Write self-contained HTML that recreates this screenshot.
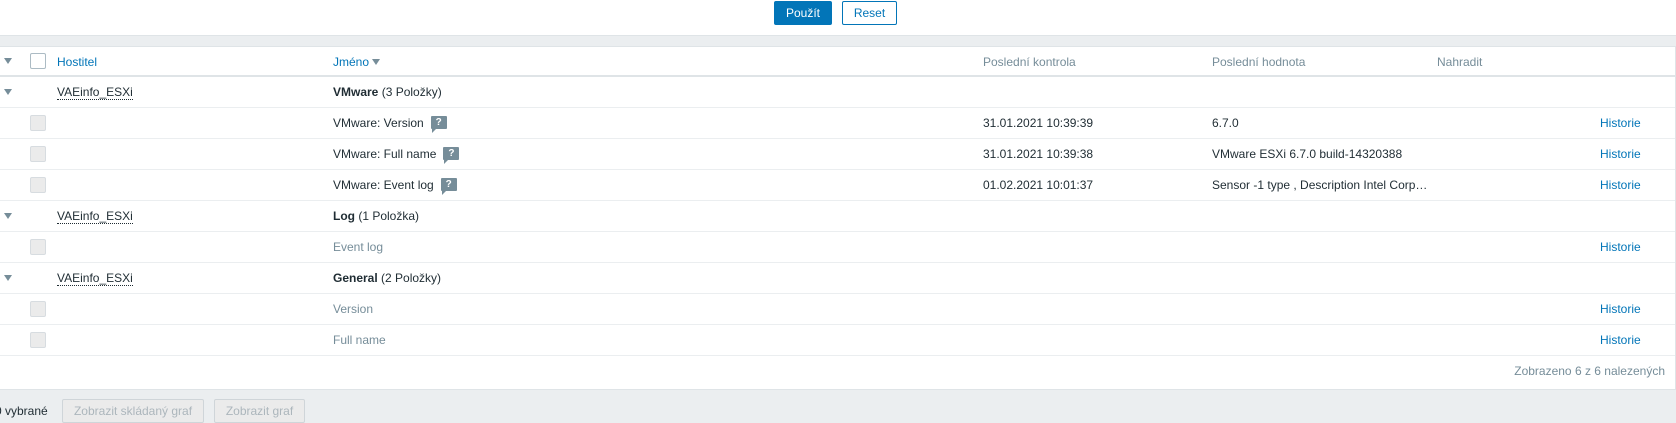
<html><head><style>
body{margin:0;width:1676px;height:419px;overflow:hidden;background:#ebeef0;font-family:"Liberation Sans",Arial,sans-serif;font-size:12px;color:#1f2c33;position:relative}
.top{position:absolute;left:0;top:0;width:1676px;height:35px;background:#fff;border-bottom:1px solid #dfe4e7}
.btn{position:absolute;top:1px;height:22px;line-height:22px;text-align:center;border-radius:2px;font-size:12px}
.panel{position:absolute;left:0;top:46px;width:1675px;height:342px;background:#fff;border-right:1px solid #dfe4e7;border-top:1px solid #dfe4e7;border-bottom:1px solid #dfe4e7}
.r{position:absolute;left:0;width:1675px;height:30px;border-bottom:1px solid #ebeef0}
.t{position:absolute;top:8px;white-space:nowrap}
.cb{position:absolute;left:30px;top:7px;width:14px;height:14px;border:1px solid #d7dce0;background:#ebebeb;border-radius:2px}
.ar{position:absolute;left:4px;top:12px;width:0;height:0;border-left:4px solid transparent;border-right:4px solid transparent;border-top:6px solid #768d99}
.h{color:#0275b8}
.g{color:#768d99}
.host{border-bottom:1px dotted #1f2c33}
.q{display:inline-block;position:relative;width:16px;height:13px;background:#768d99;border-radius:1px;color:#fff;font-size:10px;font-weight:bold;text-align:center;line-height:13px;vertical-align:top;margin-left:7px;margin-top:0px}
.q:after{content:"";position:absolute;left:1px;bottom:-4px;border-left:4px solid #768d99;border-bottom:4px solid transparent}
.bb{position:absolute;top:399px;height:22px;line-height:22px;border:1px solid #cfd5d9;background:#ebebeb;color:#acb6bc;border-radius:2px;text-align:center}
</style></head><body>
<div class="top">
<div class="btn" style="left:774px;background:#0275b8;color:#fff;border:1px solid #0275b8;width:56px">Použít</div>
<div class="btn" style="left:842px;width:53px;border:1px solid #0275b8;color:#0275b8;background:#fff">Reset</div>
</div>
<div class="panel">
<div class="r" style="top:0;height:28px;border-bottom:2px solid #dfe4e7">
<div class="ar" style="top:11px"></div>
<div class="cb" style="top:6px;background:#fff;border-color:#acbbc4"></div>
<div class="t h" style="left:57px">Hostitel</div>
<div class="t h" style="left:333px">Jméno <span style="display:inline-block;border-left:4px solid transparent;border-right:4px solid transparent;border-top:6px solid #768d99;vertical-align:1px"></span></div>
<div class="t g" style="left:983px">Poslední kontrola</div>
<div class="t g" style="left:1212px">Poslední hodnota</div>
<div class="t g" style="left:1437px">Nahradit</div>
</div>
<div class="r" style="top:30px"><div class="ar"></div><div class="t" style="left:57px"><span class="host">VAEinfo_ESXi</span></div><div class="t" style="left:333px"><b>VMware</b> (3 Položky)</div></div>
<div class="r" style="top:61px"><div class="cb"></div><div class="t" style="left:333px">VMware: Version<span class="q">?</span></div><div class="t" style="left:983px">31.01.2021 10:39:39</div><div class="t" style="left:1212px">6.7.0</div><div class="t h" style="left:1600px">Historie</div></div>
<div class="r" style="top:92px"><div class="cb"></div><div class="t" style="left:333px">VMware: Full name<span class="q">?</span></div><div class="t" style="left:983px">31.01.2021 10:39:38</div><div class="t" style="left:1212px">VMware ESXi 6.7.0 build-14320388</div><div class="t h" style="left:1600px">Historie</div></div>
<div class="r" style="top:123px"><div class="cb"></div><div class="t" style="left:333px">VMware: Event log<span class="q">?</span></div><div class="t" style="left:983px">01.02.2021 10:01:37</div><div class="t" style="left:1212px">Sensor -1 type , Description Intel Corp…</div><div class="t h" style="left:1600px">Historie</div></div>
<div class="r" style="top:154px"><div class="ar"></div><div class="t" style="left:57px"><span class="host">VAEinfo_ESXi</span></div><div class="t" style="left:333px"><b>Log</b> (1 Položka)</div></div>
<div class="r" style="top:185px"><div class="cb"></div><div class="t g" style="left:333px">Event log</div><div class="t h" style="left:1600px">Historie</div></div>
<div class="r" style="top:216px"><div class="ar"></div><div class="t" style="left:57px"><span class="host">VAEinfo_ESXi</span></div><div class="t" style="left:333px"><b>General</b> (2 Položky)</div></div>
<div class="r" style="top:247px"><div class="cb"></div><div class="t g" style="left:333px">Version</div><div class="t h" style="left:1600px">Historie</div></div>
<div class="r" style="top:278px"><div class="cb"></div><div class="t g" style="left:333px">Full name</div><div class="t h" style="left:1600px">Historie</div></div>
<div class="t g" style="top:317px;right:10px">Zobrazeno 6 z 6 nalezených</div>
</div>
<div style="position:absolute;left:-5px;top:404px">0 vybrané</div>
<div class="bb" style="left:62px;width:140px">Zobrazit skládaný graf</div>
<div class="bb" style="left:214px;width:89px">Zobrazit graf</div>
</body></html>
